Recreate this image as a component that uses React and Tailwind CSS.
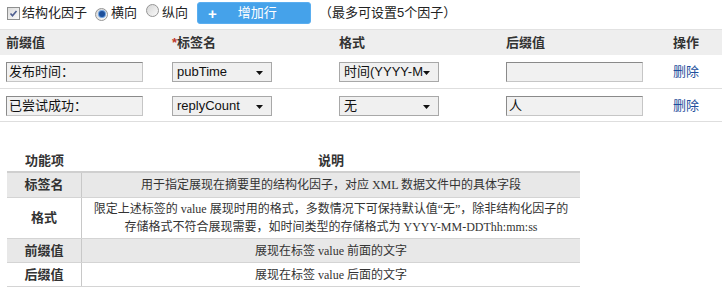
import React from "react";

const sans = { fontFamily: '"Liberation Sans", "Noto Sans CJK SC", sans-serif' };
const serifMix = { fontFamily: '"Liberation Serif", "Noto Sans CJK SC", serif' };

function Checkbox() {
  return (
    <span className="inline-flex h-[13px] w-[13px] items-center justify-center border border-[#8e8f8f] bg-gradient-to-br from-[#dcdcdc] to-[#fbfbfb]">
      <svg width="9" height="9" viewBox="0 0 9 9">
        <path d="M1.5 4.5 L3.5 6.8 L7.5 2" fill="none" stroke="#4d5d8f" strokeWidth="1.6" />
      </svg>
    </span>
  );
}

function Radio({ checked }) {
  return (
    <span className="inline-flex h-[13px] w-[13px] items-center justify-center rounded-full border border-[#959595] bg-gradient-to-br from-[#d6d6d6] to-[#fafafa]">
      {checked && (
        <span className="h-[6px] w-[6px] rounded-full bg-[#1d4f9a] shadow-[0_0_0_1px_#6fa3e0]" />
      )}
    </span>
  );
}

function Input({ value }) {
  return (
    <div className="flex h-[20px] w-[137px] items-center border border-t-[#8a8a8a] border-l-[#8a8a8a] border-b-[#c6c6c6] border-r-[#c6c6c6] bg-[#f1f1f1] pl-[2px] text-[13px] text-[#111]">
      {value}
    </div>
  );
}

function Select({ value }) {
  return (
    <div className="relative flex h-[20px] w-[100px] items-center border border-[#a8a8a8] bg-[#f0f0f0] pl-[4px] text-[13px] text-[#111]">
      <span className="w-[82px] overflow-hidden whitespace-nowrap">{value}</span>
      <svg className="absolute right-[8px] top-[8px]" width="7" height="4" viewBox="0 0 7 4">
        <path d="M0 0 H7 L3.5 4 Z" fill="#111" />
      </svg>
    </div>
  );
}

const rows = [
  { prefix: "发布时间：", tag: "pubTime", fmt: "时间(YYYY-M", suffix: "" },
  { prefix: "已尝试成功：", tag: "replyCount", fmt: "无", suffix: "人" },
];

export default function App() {
  return (
    <div className="h-[294px] w-[728px] bg-white text-[#222]" style={sans}>
      {/* top bar */}
      <div className="flex h-[26px] items-center pl-[7px] text-[13px]">
        <Checkbox />
        <span className="ml-[2px]">结构化因子</span>
        <span className="ml-[8px]"><Radio checked /></span>
        <span className="ml-[3px]">横向</span>
        <span className="ml-[9px]"><Radio /></span>
        <span className="ml-[3px]">纵向</span>
        <div className="ml-[9px] flex h-[22px] w-[114px] items-center rounded-[3px] border border-[#5aaef0] bg-[#45a2ea] text-white">
          <span className="ml-[10px] text-[15px] font-bold leading-none">+</span>
          <span className="ml-[21px] text-[13px]">增加行</span>
        </div>
        <span className="ml-[8px]">（最多可设置5个因子）</span>
      </div>

      {/* top table */}
      <div className="mt-[3px] w-[722px] border-t border-[#e2e2e2]">
        <div className="grid h-[25px] grid-cols-[166px_167px_167px_167px_1fr] items-center bg-[#eeeeee] pl-[6px] text-[13px] font-bold text-[#333]">
          <span>前缀值</span>
          <span><span className="text-[#c0392b]">*</span>标签名</span>
          <span>格式</span>
          <span>后缀值</span>
          <span>操作</span>
        </div>
        {rows.map((r, i) => (
          <div
            key={i}
            className={`grid grid-cols-[166px_167px_167px_167px_1fr] items-center border-b border-[#dedede] pl-[6px] ${i === 0 ? "h-[34px] pt-[1px]" : "h-[33px] pt-[1px]"}`}
          >
            <Input value={r.prefix} />
            <Select value={r.tag} />
            <Select value={r.fmt} />
            <Input value={r.suffix} />
            <span className="text-[13px] text-[#1f4f9c]">删除</span>
          </div>
        ))}
      </div>

      {/* bottom table */}
      <div className="ml-[7px] mt-[28px] w-[573px] text-[12px] text-[#333]">
        <div className="grid h-[23px] grid-cols-[75px_1fr] items-center border-b-2 border-[#cfcfcf] text-[13px] font-bold text-[#333]">
          <span className="text-center">功能项</span>
          <span className="text-center">说明</span>
        </div>
        {[
          { k: "标签名", v: ["用于指定展现在摘要里的结构化因子，对应 XML 数据文件中的具体字段"], gray: true, h: "h-[25px]" },
          {
            k: "格式",
            v: [
              "限定上述标签的 value 展现时用的格式，多数情况下可保持默认值“无”，除非结构化因子的",
              "存储格式不符合展现需要，如时间类型的存储格式为 YYYY-MM-DDThh:mm:ss",
            ],
            gray: false,
            h: "h-[41px]",
          },
          { k: "前缀值", v: ["展现在标签 value 前面的文字"], gray: true, h: "h-[24px]" },
          { k: "后缀值", v: ["展现在标签 value 后面的文字"], gray: false, h: "h-[24px]" },
        ].map((row, i) => (
          <div
            key={i}
            className={`grid grid-cols-[75px_1fr] border-b border-[#d4d4d4] ${row.h} ${row.gray ? "bg-[#e8e8e8]" : "bg-white"}`}
          >
            <div className="flex items-center justify-center border-r border-[#c8c8c8] text-[13px] font-bold text-[#333]" style={sans}>
              {row.k}
            </div>
            <div className="flex flex-col items-center justify-center leading-[18px]" style={serifMix}>
              {row.v.map((t, j) => (
                <span key={j} className="whitespace-nowrap">{t}</span>
              ))}
            </div>
          </div>
        ))}
      </div>
    </div>
  );
}
